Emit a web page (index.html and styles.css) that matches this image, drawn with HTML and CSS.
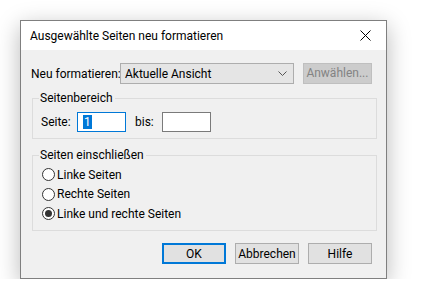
FILE: index.html
```html
<!DOCTYPE html>
<html lang="de">
<head>
    <meta charset="UTF-8">
    <title>Ausgewählte Seiten neu formatieren</title>
    <link rel="stylesheet" href="styles.css">
</head>
<body>
    <div class="dialog">
        <div class="titlebar">
            <span class="title">Ausgewählte Seiten neu formatieren</span>
            <button class="close" aria-label="Schließen">
                <svg width="11" height="11" viewBox="0 0 11 11">
                    <path d="M0.5 0.5 L10.5 10.5 M10.5 0.5 L0.5 10.5" stroke="#000" stroke-width="1" fill="none"/>
                </svg>
            </button>
        </div>

        <div class="content">
            <div class="format-row">
                <span class="label">Neu formatieren:</span>
                <div class="combo">
                    <span>Aktuelle Ansicht</span>
                    <svg width="9" height="5" viewBox="0 0 9 5">
                        <path d="M0.5 0.5 L4.5 4.5 L8.5 0.5" stroke="#555" stroke-width="1" fill="none"/>
                    </svg>
                </div>
                <button class="btn disabled">Anwählen...</button>
            </div>

            <fieldset class="group range">
                <legend>Seitenbereich</legend>
                <div class="range-row">
                    <span class="label">Seite:</span>
                    <div class="field focused"><span class="sel">1</span></div>
                    <span class="label bis">bis:</span>
                    <div class="field"></div>
                </div>
            </fieldset>

            <fieldset class="group include">
                <legend>Seiten einschließen</legend>
                <div class="radio"><span class="dot"></span>Linke Seiten</div>
                <div class="radio"><span class="dot"></span>Rechte Seiten</div>
                <div class="radio checked"><span class="dot"></span>Linke und rechte Seiten</div>
            </fieldset>

            <div class="buttons">
                <button class="btn default">OK</button>
                <button class="btn">Abbrechen</button>
                <button class="btn">Hilfe</button>
            </div>
        </div>
    </div>
</body>
</html>
```

FILE: styles.css
```css
body {
    margin: 0;
    background-color: #fff;
    font-family: Roboto, "Noto Sans", sans-serif;
    font-size: 12px;
    color: #000;
}

.dialog {
    box-sizing: border-box;
    width: 367px;
    height: 259px;
    margin: 20px 0 0 20px;
    border: 1px solid #7f7f7f;
    background-color: #f0f0f0;
    box-shadow: 0 6px 22px rgba(0, 0, 0, 0.28);
    display: flex;
    flex-direction: column;
}

.titlebar {
    height: 29px;
    background-color: #fff;
    display: flex;
    align-items: center;
    justify-content: space-between;
    padding-left: 9px;
}

.title {
    font-size: 12px;
    margin-top: 1px;
}

.close {
    border: none;
    background: none;
    width: 46px;
    height: 29px;
    padding: 0;
    display: flex;
    align-items: center;
    justify-content: center;
    padding-left: 5px;
}

.content {
    padding: 13px 14px 0 10px;
    display: flex;
    flex-direction: column;
}

.format-row {
    display: flex;
    align-items: center;
    height: 21px;
    white-space: nowrap;
}

.format-row .label {
    width: 89px;
}

.combo {
    box-sizing: border-box;
    width: 178px;
    height: 21px;
    border: 1px solid #adadad;
    background-color: #e5e5e5;
    display: flex;
    align-items: center;
    justify-content: space-between;
    padding: 0 6px 0 4px;
}

.btn {
    box-sizing: border-box;
    width: 64px;
    height: 21px;
    padding: 0;
    border: 1px solid #adadad;
    background-color: #e1e1e1;
    font-family: inherit;
    font-size: 12px;
    color: #000;
}

.btn.disabled {
    width: 71px;
    margin-left: 9px;
    margin-top: -1px;
    border-color: #bfbfbf;
    background-color: #cccccc;
    color: #838383;
}

.btn.default {
    border: 2px solid #0078d7;
}

.group {
    margin: 0 0 0 1px;
    padding: 0;
    border: 1px solid #dcdcdc;
    width: 345px;
    box-sizing: border-box;
}

.group legend {
    margin-left: 6px;
    padding: 0 2px 0 1px;
    line-height: 16px;
}

.range {
    margin-top: 6px;
    height: 49px;
}

.range-row {
    display: flex;
    align-items: center;
    padding: 6px 0 0 8px;
}

.range-row .label {
    width: 36px;
}

.range-row .bis {
    width: 27px;
    margin-left: 9px;
}

.field {
    box-sizing: border-box;
    width: 49px;
    height: 20px;
    border: 1px solid #7a7a7a;
    background-color: #fff;
    display: flex;
    align-items: center;
    padding-left: 5px;
}

.field.focused {
    border-color: #0078d7;
}

.sel {
    background-color: #0078d7;
    color: #fff;
    line-height: 14px;
    padding: 0 1px;
}

.include {
    margin-top: 8px;
    height: 84px;
    padding-top: 2px;
}

.radio {
    display: flex;
    align-items: center;
    height: 19.5px;
    padding-left: 9px;
}

.dot {
    box-sizing: border-box;
    width: 13px;
    height: 13px;
    border: 1px solid #333;
    border-radius: 50%;
    background-color: #fff;
    margin-right: 2px;
    display: flex;
    align-items: center;
    justify-content: center;
}

.radio.checked .dot::after {
    content: "";
    width: 7px;
    height: 7px;
    border-radius: 50%;
    background-color: #333;
}

.buttons {
    display: flex;
    justify-content: flex-end;
    gap: 9px;
    margin-top: 12px;
}
```
